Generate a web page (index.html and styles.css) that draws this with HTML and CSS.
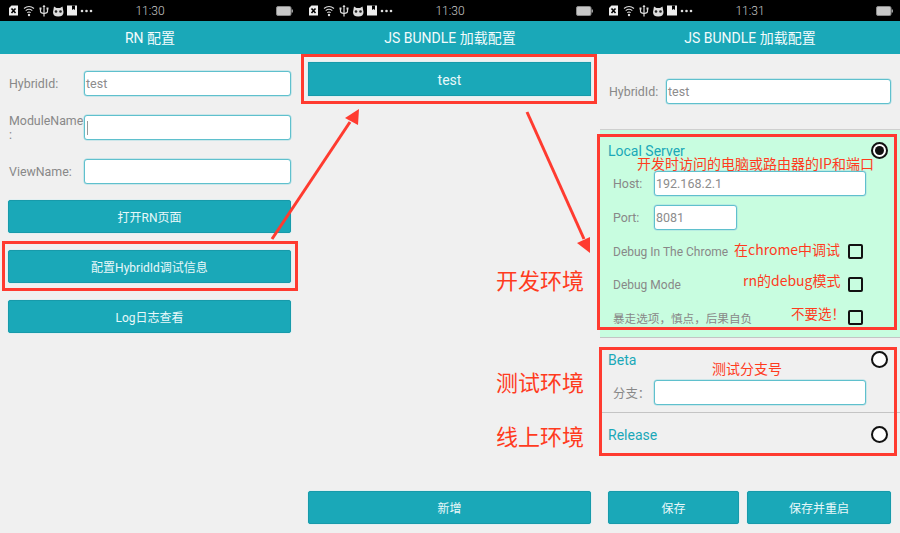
FILE: index.html
```html
<!DOCTYPE html>
<html lang="zh">
<head>
<meta charset="utf-8">
<title>RN 配置</title>
<link rel="stylesheet" href="styles.css">
</head>
<body>
<svg class="defs" width="0" height="0">
  <symbol id="status-icons" viewBox="0 0 94 12">
    <path d="M1 3 3.500 .5H10v10H1z" fill="#eee"/>
    <path d="M3.500 3.500 7.500 8M7.500 3.500 3.500 8" stroke="#000" stroke-width="1.600" fill="none"/>
    <g fill="none" stroke="#ddd" stroke-width="1.100">
      <path d="M16 3.500Q21-.5 26 3.500"/>
      <path d="M17.700 5.600Q21 3 24.300 5.600"/>
      <path d="M19.300 7.600Q21 6.300 22.700 7.600"/>
    </g>
    <circle cx="21" cy="10" r="1.200" fill="#ddd"/>
    <g fill="none" stroke="#ddd" stroke-width="1.200">
      <path d="M36 1V11.500"/>
      <path d="M32.500 4V6.500Q32.500 8 36 8.500Q39.500 8 39.500 6.500V4"/>
    </g>
    <path d="M36-.5 37.500 2H34.500z" fill="#ddd"/>
    <rect x="31.500" y="2.500" width="2" height="2" fill="#ddd"/>
    <rect x="38.500" y="2.500" width="2" height="2" fill="#ddd"/>
    <path d="M46 1.500 48.500 3H52L54.500 1.500 55.500 7Q55.500 11.500 50.200 11.500 45 11.500 45 7z" fill="#ddd"/>
    <circle cx="48" cy="6.500" r="1.300" fill="#222"/>
    <circle cx="52.500" cy="6.500" r="1.300" fill="#222"/>
    <path d="M59 .5H69V10.500H59z" fill="#eee"/>
    <path d="M64 .5V5L65.500 4 67 5V.5z" fill="#000"/>
    <circle cx="74" cy="6" r="1.300" fill="#ddd"/>
    <circle cx="78.500" cy="6" r="1.300" fill="#ddd"/>
    <circle cx="83" cy="6" r="1.300" fill="#ddd"/>
  </symbol>
  <symbol id="battery" viewBox="0 0 17 10">
    <rect x=".5" y=".5" width="14.500" height="9" rx="1.500" fill="#c8c8c8" stroke="#8a8a8a"/>
    <rect x="15.500" y="3.500" width="1.500" height="3" fill="#999"/>
  </symbol>
</svg>

<main class="screens">
  <section class="phone">
    <div class="status">
      <svg class="status-icons"><use href="#status-icons"/></svg>
      <span class="clock">11:30</span>
      <svg class="battery"><use href="#battery"/></svg>
    </div>
    <header class="title">RN 配置</header>
    <div class="form">
      <div class="row"><label class="label">HybridId:</label><div class="input">test</div></div>
      <div class="row"><label class="label">ModuleName<br>:</label><div class="input"><i class="cursor"></i></div></div>
      <div class="row"><label class="label">ViewName:</label><div class="input"></div></div>
    </div>
    <div class="actions">
      <button class="btn">打开RN页面</button>
      <button class="btn">配置HybridId调试信息</button>
      <button class="btn">Log日志查看</button>
    </div>
  </section>

  <section class="phone">
    <div class="status">
      <svg class="status-icons"><use href="#status-icons"/></svg>
      <span class="clock">11:30</span>
      <svg class="battery"><use href="#battery"/></svg>
    </div>
    <header class="title">JS BUNDLE 加载配置</header>
    <div class="list"><button class="btn btn-square">test</button></div>
    <div class="footer"><button class="btn btn-fill">新增</button></div>
  </section>

  <section class="phone">
    <div class="status">
      <svg class="status-icons"><use href="#status-icons"/></svg>
      <span class="clock">11:31</span>
      <svg class="battery"><use href="#battery"/></svg>
    </div>
    <header class="title">JS BUNDLE 加载配置</header>
    <div class="hybrid"><label class="label label-short">HybridId:</label><div class="input">test</div></div>

    <div class="env env-local">
      <div class="env-head"><span class="env-name">Local Server</span><span class="radio radio-on"></span></div>
      <div class="field"><label class="field-label">Host:</label><div class="input input-wide">192.168.2.1</div></div>
      <div class="field"><label class="field-label">Port:</label><div class="input input-port">8081</div></div>
      <div class="check"><span>Debug In The Chrome</span><i class="box"></i></div>
      <div class="check"><span>Debug Mode</span><i class="box"></i></div>
      <div class="check"><span class="small">暴走选项，慎点，后果自负</span><i class="box"></i></div>
    </div>

    <div class="env env-beta">
      <div class="env-head"><span class="env-name">Beta</span><span class="radio"></span></div>
      <div class="field"><label class="field-label">分支：</label><div class="input input-wide"></div></div>
    </div>

    <div class="env env-release">
      <div class="env-head"><span class="env-name">Release</span><span class="radio"></span></div>
    </div>

    <div class="footer footer-split">
      <button class="btn btn-save">保存</button>
      <button class="btn btn-restart">保存并重启</button>
    </div>
  </section>
</main>

<div class="notes">
  <div class="frame frame-config"></div>
  <div class="frame frame-test"></div>
  <div class="frame frame-local"></div>
  <div class="frame frame-beta"></div>
  <svg class="arrows" width="900" height="533" viewBox="0 0 900 533">
    <path d="M272 239 350 122" stroke="#ff3b30" stroke-width="3" fill="none"/>
    <path d="M359 109 345 118 358 125z" fill="#ff3b30"/>
    <path d="M527 112 584 239" stroke="#ff3b30" stroke-width="3" fill="none"/>
    <path d="M590 253 577 243 590 237z" fill="#ff3b30"/>
  </svg>
  <span class="note note-big note-dev">开发环境</span>
  <span class="note note-big note-test">测试环境</span>
  <span class="note note-big note-prod">线上环境</span>
  <span class="note note-ip">开发时访问的电脑或路由器的IP和端口</span>
  <span class="note note-chrome">在chrome中调试</span>
  <span class="note note-debug">rn的debug模式</span>
  <span class="note note-no">不要选！</span>
  <span class="note note-branch">测试分支号</span>
</div>
</body>
</html>
```
FILE: styles.css
```css
* { box-sizing: border-box; }
html, body { margin: 0; padding: 0; width: 900px; height: 533px; overflow: hidden; background: #f0f0f0; }
body { font-family: Roboto, "Noto Sans CJK SC", sans-serif; position: relative; }
.defs { position: absolute; }

.screens { display: grid; grid-template-columns: repeat(3, 300px); height: 533px; }
.phone { display: flex; flex-direction: column; height: 533px; background: #f0f0f0; min-width: 0; }

.status { height: 21px; background: #000; display: flex; align-items: center; position: relative; padding: 0 7px 0 8px; justify-content: space-between; }
.status-icons { width: 94px; height: 12px; }
.battery { width: 17px; height: 10px; }
.clock { position: absolute; left: 0; right: 0; top: 1px; text-align: center; color: #c8c8c8; font-size: 12px; font-weight: 300; line-height: 21px; }

.title { height: 33px; background: #1aa8b8; color: #f2fbfc; font-size: 14px; line-height: 34px; text-align: center; }

.form { padding: 17px 9px 0 9px; display: flex; flex-direction: column; gap: 19px; }
.row { display: flex; align-items: center; height: 25px; }
.label { width: 75px; flex: none; font-size: 12.400px; line-height: 14px; color: #888; }
.label-short { width: 57px; }

.input { flex: 1; height: 25px; min-width: 0; background: #fff; border: 1px solid #5fc0cd; border-radius: 3px; color: #8c8c8c; font-size: 12.500px; line-height: 24px; padding-left: 1px; position: relative; box-shadow: 0 0 0 .5px #a8dbe2; }
.cursor { position: absolute; left: 2px; top: 5px; width: 1px; height: 14px; background: #999; }

.actions { padding: 16px 9px 0 8px; display: flex; flex-direction: column; gap: 17px; }
.btn { display: block; height: 33px; width: 100%; padding: 0; border: 1px solid #179aaa; border-radius: 2px; background: #1aa8b8; color: #e8f8fa; font: inherit; font-size: 12px; box-shadow: 0 0 0 .5px #d4eef1; }

.list { padding: 8px 9px 0 8px; }
.btn-square { height: 34px; border-radius: 0; font-size: 14px; padding-top: 1px; }

.footer { margin-top: auto; padding: 0 9px 9px 8px; }
.footer-split { display: flex; gap: 8px; }
.btn-fill { width: 100%; }
.btn-save { width: 131px; flex: none; }
.btn-restart { flex: 1; min-width: 0; }

.hybrid { display: flex; align-items: center; height: 76px; padding: 25px 9px 25px 9px; border-bottom: 1px solid #cfcfcf; }

.env { padding-left: 8px; }
.env-local { height: 208px; background: #c8fde0; padding-top: 11px; border-bottom: 1px solid #c4c4c4; }
.env-beta { height: 75px; padding-top: 12px; border-bottom: 1px solid #c4c4c4; }
.env-release { padding-top: 12px; }
.env-head { display: flex; justify-content: space-between; align-items: center; height: 19px; padding-right: 12px; }
.env-name { font-size: 14px; color: #1aa8b8; padding-top: 1px; }
.radio { width: 17px; height: 17px; border: 2px solid #111; border-radius: 50%; background: #fff; display: flex; align-items: center; justify-content: center; }
.radio-on::after { content: ""; width: 9px; height: 9px; border-radius: 50%; background: #111; }

.env-local .env-head + .field { margin-top: 11px; }
.env-beta .env-head + .field { margin-top: 11px; }
.field { display: flex; align-items: center; height: 25px; padding: 0 34px 0 5px; }
.field + .field { margin-top: 9px; }
.field-label { width: 41px; flex: none; font-size: 12.400px; color: #888; }
.input-port { flex: none; width: 83px; }

.check { display: flex; align-items: center; justify-content: space-between; height: 33px; padding: 0 37px 0 5px; font-size: 12px; color: #888; }
.check:nth-of-type(4) { margin-top: 5px; }
.check .small { font-size: 11.600px; }
.box { width: 15px; height: 15px; border: 2px solid #111; border-radius: 2px; }

.notes { position: absolute; left: 0; top: 0; width: 900px; height: 533px; pointer-events: none; }
.arrows { position: absolute; left: 0; top: 0; }
.frame { position: absolute; border: 3px solid #ff3b30; }
.frame-config { left: 2px; top: 241px; width: 296px; height: 50px; }
.frame-test { left: 301px; top: 54px; width: 296px; height: 50px; }
.frame-local { left: 597px; top: 134px; width: 300px; height: 196px; }
.frame-beta { left: 599px; top: 347px; width: 298px; height: 109px; }

.note { position: absolute; color: #ff3b1e; white-space: nowrap; font-family: "Noto Sans CJK SC", sans-serif; line-height: 1; }
.note-big { font-size: 22px; left: 496px; }
.note-dev { top: 268px; }
.note-test { top: 370px; }
.note-prod { top: 424px; }
.note-ip { left: 637px; top: 156px; font-size: 14px; }
.note-chrome { left: 734px; top: 242px; font-size: 14px; }
.note-debug { left: 743px; top: 273px; font-size: 14px; }
.note-no { left: 791px; top: 307px; font-size: 13.500px; font-family: "Noto Sans CJK TC", sans-serif; }
.note-branch { left: 712px; top: 361px; font-size: 14px; }
```
